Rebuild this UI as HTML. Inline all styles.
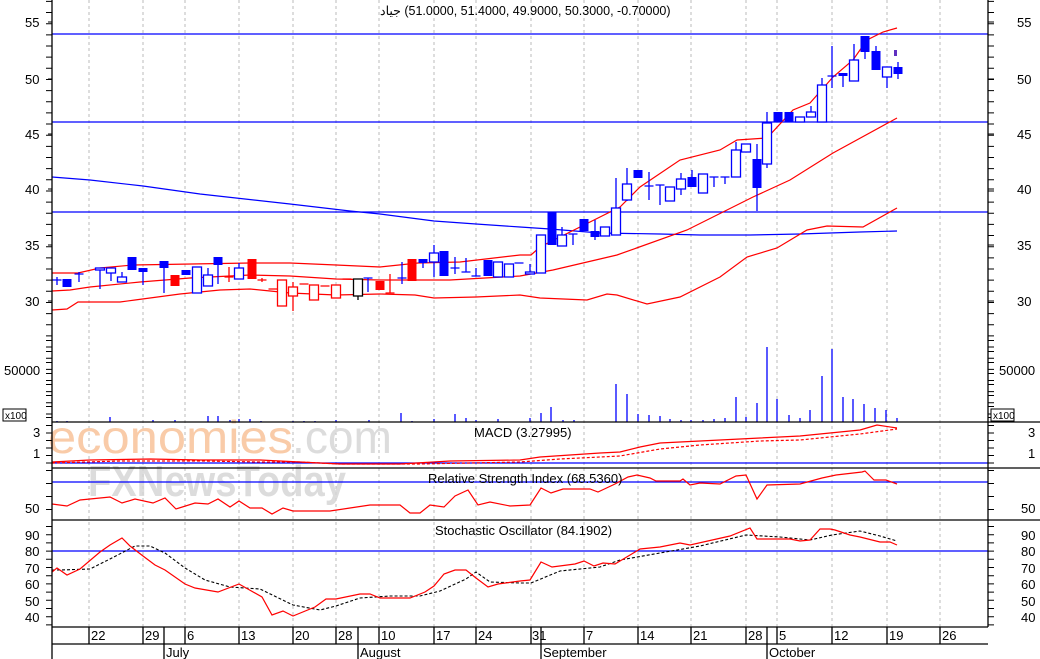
<!DOCTYPE html>
<html><head><meta charset="utf-8"><style>
html,body{margin:0;padding:0;background:#fff;}
svg{display:block;font-family:"Liberation Sans",Arial,"Noto Sans CJK SC",sans-serif;}
</style></head><body>
<svg width="1040" height="659" viewBox="0 0 1040 659" xmlns="http://www.w3.org/2000/svg">
<rect width="1040" height="659" fill="#fff"/>
<g stroke="#bbb" stroke-width="1" stroke-dasharray="3 3">
<path d="M89 0V627M143 0V627M185 0V627M239 0V627M293 0V627M336 0V627M379 0V627M434 0V627M476 0V627M531 0V627M584 0V627M638 0V627M691 0V627M746 0V627M777 0V627M832 0V627M887 0V627M940 0V627"/>
</g>
<text x="48" y="453" font-size="46" fill="#f9cba8" textLength="245" lengthAdjust="spacingAndGlyphs">economies</text>
<text x="292" y="453" font-size="46" fill="#dcdcdc" textLength="100" lengthAdjust="spacingAndGlyphs">.com</text>
<text x="88" y="496" font-size="44" font-weight="bold" fill="#d6d6d6" opacity="0.85" textLength="258" lengthAdjust="spacingAndGlyphs">FXNewsToday</text>
<g stroke="#0000ff" stroke-width="1.2" fill="none">
<path d="M52 34H988M52 122H988M52 212H988"/>
<polyline points="52,177 90,180 143,186 200,194 290,204 350,211 380,214 434,221 476,224 520,227 550,229 600,233 660,234 700,235 750,235 800,234 860,232 897,231"/>
</g>
<g stroke="#ff0000" stroke-width="1.2" fill="none">
<polyline points="52,273 78,273 100,268 133,265 250,263 290,263 336,265 380,267 418,263 460,262 520,255 531,255 540,247 620,207 640,187 680,160 720,150 737,140 767,138 793,110 810,103 833,77 853,60 867,40 883,32 897,28"/>
<polyline points="52,291 70,290 90,287 140,282 190,278 250,275 290,276 336,279 380,280 450,280 520,276 553,270 617,255 687,230 753,197 790,180 833,153 897,118"/>
<polyline points="52,310 67,309 78,302 120,302 135,300 180,294 220,290 250,289 290,293 336,295 380,294 415,295 434,298 476,297 520,295 540,298 587,300 607,294 617,295 647,304 680,297 720,277 747,257 777,248 807,230 827,226 863,227 897,208"/>
</g>
<g stroke="#0000ff" stroke-width="1.3" fill="#fff">
<path d="M57 277V285M52.5 280H61.5M79 272V282M74.5 274H83.5M100 268V289M111 268V281M122 272V282M143 268V285M164 261V293M208 268V286M218 257V284M239 263V279M368 278V292M363.5 278H372.5M402 262V284M397.5 278H406.5M423 259V268M434 245V277M455 257V274M450.5 268H459.5M466 258V272M461.5 272H470.5M476 268V276M471.5 276H480.5M514.5 263H523.5
M530 264V274M562 227V246M573 234V245M568.5 234H577.5M595 220V240M616 178V235M627 168V201M649 172V200M644.5 186H653.5M660 185V205M655.5 185H664.5M681 173V195M692 170V187M714 177V187M709.5 177H718.5M725 177V184M720.5 177H729.5M736 142V177M757 144V211M767 112V168M811 106V117M822 78V122M832 46V88M827.5 76H836.5M843 73V87M854 44V81M865 36V59M876 46V70M887 67V88M898 62V79"/>
<rect x="95.5" y="268" width="9" height="2"/><rect x="106.5" y="268" width="9" height="5"/><rect x="117.5" y="277" width="9" height="5"/>
<rect x="192.5" y="267" width="9" height="26"/><rect x="203.5" y="275" width="9" height="11"/><rect x="234.5" y="268" width="9" height="11"/>
<rect x="429.5" y="253" width="9" height="9"/><rect x="493.5" y="262" width="9" height="15"/><rect x="504.5" y="264" width="9" height="13"/>
<rect x="525.5" y="272" width="9" height="2"/><rect x="536.5" y="235" width="9" height="38"/><rect x="557.5" y="235" width="9" height="11"/>
<rect x="600.5" y="227" width="9" height="9"/><rect x="611.5" y="208" width="9" height="27"/><rect x="622.5" y="184" width="9" height="16"/>
<rect x="665.5" y="187" width="9" height="14"/><rect x="676.5" y="179" width="9" height="10"/><rect x="698.5" y="174" width="9" height="19"/>
<rect x="731.5" y="150" width="9" height="27"/><rect x="741.5" y="144" width="9" height="8"/><rect x="762.5" y="123" width="9" height="41"/>
<rect x="795.5" y="117" width="9" height="5"/><rect x="806.5" y="112" width="9" height="5"/><rect x="817.5" y="85" width="9" height="37"/>
<rect x="849.5" y="60" width="9" height="21"/><rect x="882.5" y="67" width="9" height="10"/>
</g>
<g fill="#0000ff">
<rect x="62.5" y="279" width="9" height="8"/><rect x="127.5" y="257" width="9" height="13"/><rect x="138.5" y="268" width="9" height="4"/>
<rect x="159.5" y="261" width="9" height="7"/><rect x="181.5" y="270" width="9" height="5"/><rect x="213.5" y="257" width="9" height="8"/>
<rect x="418.5" y="259" width="9" height="4"/><rect x="439.5" y="251" width="9" height="25"/><rect x="483.5" y="260" width="9" height="16"/>
<rect x="547.5" y="212" width="9" height="33"/><rect x="579.5" y="219" width="9" height="12"/><rect x="590.5" y="231" width="9" height="6"/>
<rect x="633.5" y="170" width="9" height="8"/><rect x="687.5" y="177" width="9" height="10"/><rect x="752.5" y="159" width="9" height="29"/>
<rect x="773.5" y="112" width="9" height="10"/><rect x="784.5" y="112" width="9" height="10"/><rect x="838.5" y="73" width="9" height="3"/>
<rect x="860.5" y="36" width="9" height="16"/><rect x="871.5" y="51" width="9" height="19"/><rect x="893.5" y="67" width="9" height="7"/>
<rect x="894" y="50" width="3" height="6" fill="#6030c0"/>
</g>
<g stroke="#ff0000" stroke-width="1.3" fill="#fff">
<path d="M229 267V282M224.5 277H233.5M262 278V282M257.5 280H266.5M268.5 289H277.5M293 282V311M299.5 284H308.5M320.5 286H329.5M342.5 279H351.5M390 274V293M385.5 293H394.5"/>
<rect x="277.5" y="280" width="9" height="26"/><rect x="288.5" y="287" width="9" height="9"/><rect x="309.5" y="285" width="9" height="15"/><rect x="331.5" y="285" width="9" height="13"/>
</g>
<g fill="#ff0000">
<rect x="170.5" y="275" width="9" height="11"/><rect x="247.5" y="259" width="9" height="20"/><rect x="375.5" y="281" width="9" height="9"/><rect x="407.5" y="259" width="9" height="22"/>
</g>
<g stroke="#000" stroke-width="1.3" fill="#fff"><path d="M358 296V300"/><rect x="353.5" y="279" width="9" height="17"/></g>
<text x="380" y="15" font-size="12.5" fill="#000" direction="ltr" unicode-bidi="embed">&#x200E;جياد&#x200E; (51.0000, 51.4000, 49.9000, 50.3000, -0.70000)</text>
<g stroke="#0000ff" stroke-width="1.3">
<path d="M57 421V422M67 421V422M110 417V422M153 420V422M175 420V422M208 416V422M218 416V422M230 420V422M239 419V422M250 419V422M261 421V422M293 421V422M304 421V422M315 421V422M336 420V422M369 420V422M401 413V422M412 421V422M434 419V422M455 414V422M466 418V422M476 420V422M498 419V422
M530 418V422M541 413V422M551 407V422M563 420V422M574 420V422M616 384V422M627 394V422M638 414V422M649 415V422M660 416V422M670 419V422M681 420V422M691 420V422M703 420V422M714 419V422M725 418V422M736 397V422M746 417V422M757 403V422M767 347V422M777 399V422M789 415V422M800 418V422M810 410V422M822 376V422M832 349V422M843 397V422M853 399V422M864 404V422M875 408V422M886 410V422M897 418V422"/>
</g>
<path d="M52 463H988" stroke="#0000ff" stroke-width="1.2"/>
<polyline fill="none" stroke="#ff0000" stroke-width="1.2" points="52,462 90,460 150,459 200,460 260,460 300,462 340,464 400,464 450,461 520,460 540,457 600,453 620,452 640,447 660,443 700,441 760,438 800,436 860,430 877,425 897,428"/>
<polyline fill="none" stroke="#ff0000" stroke-width="1.2" stroke-dasharray="3 2" points="52,463 120,461 200,461 260,462 300,462 340,464 420,464 520,462 560,459 620,456 660,449 700,445 760,441 800,440 860,434 897,429"/>
<path d="M52 482H988" stroke="#0000ff" stroke-width="1.2"/>
<polyline fill="none" stroke="#ff0000" stroke-width="1.2" points="52,504 67,506 80,500 110,497 122,503 135,499 153,503 165,498 176,509 195,503 208,504 218,499 230,507 239,501 250,508 262,508 272,514 283,508 293,511 330,511 350,508 370,505 400,505 410,513 420,513 430,505 444,507 455,496 468,490 478,505 490,502 510,506 530,505 541,488 551,493 563,489 590,489 598,492 615,484 628,477 637,475 650,478 656,481 680,481 683,479 690,485 700,483 720,484 736,476 746,475 757,499 767,485 800,484 822,478 836,475 862,472 865,471 874,480 886,480 897,484"/>
<path d="M52 551H988" stroke="#0000ff" stroke-width="1.2"/>
<polyline fill="none" stroke="#000" stroke-width="1.1" stroke-dasharray="3 2" points="52,570 60,570 90,569 110,559 135,546 150,546 165,553 185,568 205,580 230,587 260,589 293,605 320,610 336,606 360,598 390,596 420,596 440,591 466,579 476,572 490,582 520,583 531,583 560,571 600,567 620,560 660,553 700,546 746,535 780,537 810,540 832,535 860,531 880,536 897,541"/>
<polyline fill="none" stroke="#ff0000" stroke-width="1.2" points="52,572 57,568 67,575 80,569 100,552 110,545 122,538 130,546 143,556 155,565 165,570 185,584 195,588 218,592 239,584 262,597 272,615 283,611 293,616 315,607 326,599 336,599 360,594 370,594 380,598 410,598 425,592 434,586 444,574 455,570 466,570 476,578 488,587 498,584 520,581 530,580 541,562 552,567 575,564 584,561 594,566 603,563 615,564 640,549 660,547 680,543 690,545 730,536 750,528 757,539 790,539 800,541 810,540 820,529 830,529 835,530 850,535 860,537 880,542 890,542 897,545"/>
<g stroke="#000" stroke-width="1.3" fill="none">
<path d="M52 0V659M988 0V627M52 422H1040M52 468H1040M52 520H1040M52 627H988M52 644H988"/>
<path d="M89 627V644M143 627V644M164 627V659M185 627V644M239 627V644M293 627V644M336 627V644M358 627V659M379 627V644M434 627V644M476 627V644M531 627V644M541 627V659M584 627V644M638 627V644M691 627V644M746 627V644M767 627V659M777 627V644M832 627V644M887 627V644M940 627V644"/>
</g>
<g stroke="#000" stroke-width="1">
<path d="M48 22H52M48 79H52M48 134H52M48 189H52M48 245H52M48 301H52M988 22H994M988 79H994M988 134H994M988 189H994M988 245H994M988 301H994"/>
<path d="M49 0V422M991 0V422" stroke-width="6" stroke-dasharray="1 10.15" stroke-dashoffset="-0.9"/>
<path d="M49 340V422M991 340V422" stroke-width="6" stroke-dasharray="1 10"/>
<path d="M49 425V466M991 425V466" stroke-width="6" stroke-dasharray="1 6.5"/>
<path d="M49 470V520M991 470V520" stroke-width="6" stroke-dasharray="1 12"/>
<path d="M49 526V627M991 526V627" stroke-width="6" stroke-dasharray="1 7.2"/>
</g>
<g font-size="13" fill="#000">
<text x="25" y="27">55</text><text x="25" y="84">50</text><text x="25" y="139">45</text><text x="25" y="194">40</text><text x="25" y="250">35</text><text x="25" y="306">30</text>
<text x="1017" y="27">55</text><text x="1017" y="84">50</text><text x="1017" y="139">45</text><text x="1017" y="194">40</text><text x="1017" y="250">35</text><text x="1017" y="306">30</text>
<text x="4" y="375">50000</text><text x="999" y="375">50000</text>
<text x="33" y="437">3</text><text x="33" y="458">1</text><text x="1028" y="437">3</text><text x="1028" y="458">1</text>
<text x="25" y="513">50</text><text x="1021" y="513">50</text>
<text x="25" y="540">90</text><text x="25" y="556">80</text><text x="25" y="573">70</text><text x="25" y="589">60</text><text x="25" y="606">50</text><text x="25" y="622">40</text>
<text x="1021" y="540">90</text><text x="1021" y="556">80</text><text x="1021" y="573">70</text><text x="1021" y="589">60</text><text x="1021" y="606">50</text><text x="1021" y="622">40</text>
<text x="474" y="437">MACD (3.27995)</text>
<text x="428" y="483">Relative Strength Index (68.5360)</text>
<text x="435" y="535">Stochastic Oscillator (84.1902)</text>
<text x="91" y="640">22</text><text x="145" y="640">29</text><text x="187" y="640">6</text><text x="241" y="640">13</text><text x="295" y="640">20</text><text x="338" y="640">28</text><text x="381" y="640">10</text><text x="436" y="640">17</text><text x="478" y="640">24</text><text x="532" y="640">31</text><text x="586" y="640">7</text><text x="640" y="640">14</text><text x="693" y="640">21</text><text x="748" y="640">28</text><text x="779" y="640">5</text><text x="834" y="640">12</text><text x="889" y="640">19</text><text x="942" y="640">26</text>
<text x="166" y="657">July</text><text x="360" y="657">August</text><text x="543" y="657">September</text><text x="769" y="657">October</text>
</g>
<g font-size="10" fill="#000"><rect x="3" y="409" width="23" height="12" fill="#fff" stroke="#000"/><text x="5" y="419">x100</text>
<rect x="991" y="409" width="23" height="12" fill="#fff" stroke="#000"/><text x="993" y="419">x100</text></g>
</svg>
</body></html>
